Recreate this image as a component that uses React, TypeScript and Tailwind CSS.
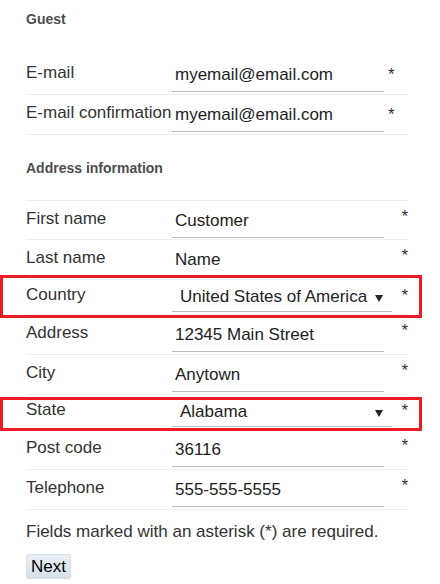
import React from 'react';

const font = { fontFamily: '"Liberation Sans", Arial, sans-serif' };

function Star({ className }: { className: string }) {
  return <span className={`text-[17px] leading-5 text-[#333] ${className}`}>*</span>;
}

function EmailRow({ label, value }: { label: string; value: string }) {
  return (
    <div className="flex h-10 items-start border-b border-[#eeeeee]">
      <div className="mt-2 w-[146px] shrink-0 whitespace-nowrap text-[17px] leading-5 text-[#333]">{label}</div>
      <div className="mt-2 h-[29px] w-[212px] shrink-0 border-b border-[#bbbbbb] pl-[3px] pt-[2px] text-[17px] leading-5 text-[#222]">
        {value}
      </div>
      <Star className="ml-1 mt-[10px]" />
    </div>
  );
}

function InputRow({ label, value, first }: { label: string; value: string; first?: boolean }) {
  return (
    <div className={`flex h-10 items-start border-b border-[#eeeeee] ${first ? 'border-t' : ''}`}>
      <div className="mt-2 w-[146px] shrink-0 whitespace-nowrap text-[17px] leading-5 text-[#333]">{label}</div>
      <div className="mt-2 h-[29px] w-[212px] shrink-0 border-b border-[#bbbbbb] pl-[3px] pt-[2px] text-[17px] leading-5 text-[#222]">
        {value}
      </div>
      <Star className="ml-auto mt-[6px]" />
    </div>
  );
}

function SelectRow({ label, value, box }: { label: string; value: string; box: 'country' | 'state' }) {
  return (
    <div className="relative flex h-[35px] items-start border-b border-[#eeeeee]">
      <div className="mt-[5px] w-[146px] shrink-0 whitespace-nowrap text-[17px] leading-5 text-[#333]">{label}</div>
      <div className="mt-[6px] flex h-[26px] w-[220px] shrink-0 items-start justify-between border-b border-[#bbbbbb] pl-2 pr-[9px] pt-px">
        <span className="text-[17px] leading-5 text-[#222]">{value}</span>
        <svg width="8" height="7" viewBox="0 0 8 7" className="mt-[8px]">
          <polygon points="0,0 8,0 4,7" fill="#222" />
        </svg>
      </div>
      <Star className="ml-auto mt-[6px]" />
      {box === 'country' ? (
        <span className="pointer-events-none absolute left-[-26px] top-[-5px] h-[43px] w-[422px] border-[3px] border-[#ed1c24]" />
      ) : (
        <span className="pointer-events-none absolute left-[-26px] top-[2px] h-[34px] w-[422px] border-[3px] border-[#ed1c24]" />
      )}
    </div>
  );
}

export default function App() {
  return (
    <div className="h-[584px] w-[440px] bg-white" style={font}>
      <div className="w-[408px] pl-[26px]">
        <div className="h-[55px] pt-[11px]">
          <h3 className="text-[14px] font-bold leading-4 text-[#4d4d4d]">Guest</h3>
        </div>
        <EmailRow label="E-mail" value="myemail@email.com" />
        <EmailRow label="E-mail confirmation" value="myemail@email.com" />

        <div className="h-[65px] pt-[25px]">
          <h3 className="text-[14px] font-bold leading-4 text-[#4d4d4d]">Address information</h3>
        </div>
        <InputRow label="First name" value="Customer" first />
        <InputRow label="Last name" value="Name" />
        <SelectRow label="Country" value="United States of America" box="country" />
        <InputRow label="Address" value="12345 Main Street" />
        <InputRow label="City" value="Anytown" />
        <SelectRow label="State" value="Alabama" box="state" />
        <InputRow label="Post code" value="36116" />
        <InputRow label="Telephone" value="555-555-5555" />

        <p className="mt-[12px] whitespace-nowrap text-[17px] leading-5 text-[#333]">
          Fields marked with an asterisk (*) are required.
        </p>
        <button
          type="button"
          className="mt-[12px] flex h-[25px] items-center rounded-[2px] border border-[#d6dee6] bg-gradient-to-b from-[#e9eff4] to-[#d6e1ea] px-[4px] text-[17px] leading-5 text-black"
        >
          Next
        </button>
      </div>
    </div>
  );
}
